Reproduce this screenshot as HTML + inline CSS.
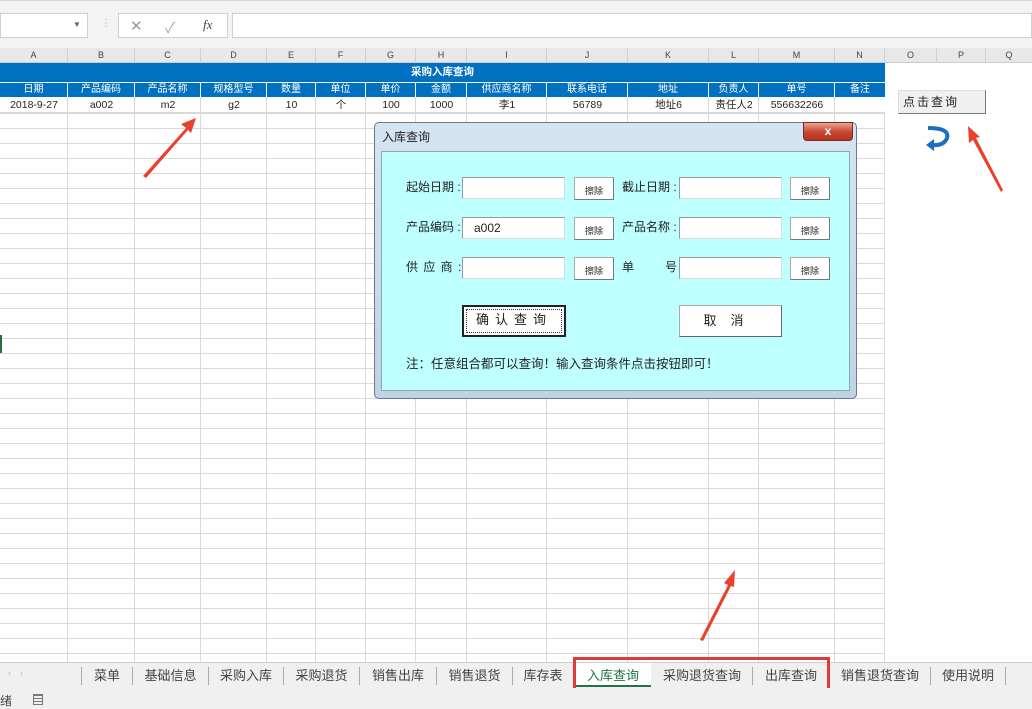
<!DOCTYPE html>
<html><head><meta charset="utf-8"><style>
*{margin:0;padding:0;box-sizing:border-box}
body{width:1032px;height:709px;overflow:hidden;background:#fff;font-family:"Liberation Sans","Noto Sans CJK SC",sans-serif;position:relative;font-size:11px;color:#222}
.a{position:absolute;white-space:nowrap}
.hc{position:absolute;top:48px;height:15px;font-size:9px;color:#444;text-align:center;line-height:15px;border-right:1px solid #d0d0d0}
.th{position:absolute;top:83px;height:14px;color:#fff;font-size:10px;text-align:center;line-height:14px;border-right:1px solid #fff;white-space:nowrap}
.td{position:absolute;top:97px;height:16px;font-size:10.5px;text-align:center;line-height:16px;white-space:nowrap}
.inp{position:absolute;background:#fff;border:1px solid #999;border-right-color:#ddd;border-bottom-color:#ddd;height:22px;width:103px}
.btn{position:absolute;background:#fff;border:1px solid #aaa;border-right-color:#777;border-bottom-color:#777;height:23px;width:40px;font-size:9px;text-align:center;line-height:26px}
.lb{position:absolute;font-size:12px;white-space:nowrap}
.tab{position:absolute;top:663px;height:25px;line-height:25px;font-size:13px;color:#444;text-align:center;white-space:nowrap}
.sep{position:absolute;top:667px;width:1px;height:18px;background:#aaa}
</style></head><body>
<div class="a" style="left:0;top:0;width:1032px;height:48px;background:#f3f3f3;border-top:1px solid #d6d6d6"></div>
<div class="a" style="left:0;top:13px;width:88px;height:25px;background:#fff;border:1px solid #d0d0d0"></div>
<div class="a" style="left:73px;top:20px;font-size:8px;color:#666">▼</div>
<div class="a" style="left:101px;top:18px;color:#aaa;font-size:10px">⋮</div>
<div class="a" style="left:118px;top:13px;width:110px;height:25px;background:#fff;border:1px solid #d0d0d0"></div>
<div class="a" style="left:130px;top:17px;color:#999;font-size:15px">✕</div>
<div class="a" style="left:165px;top:17px;color:#aaa;font-size:15px">✓</div>
<div class="a" style="left:203px;top:17px;color:#444;font-size:13px;font-style:italic;font-family:'Liberation Serif',serif">fx</div>
<div class="a" style="left:232px;top:13px;width:800px;height:25px;background:#fff;border:1px solid #d0d0d0"></div>
<div class="a" style="left:0;top:48px;width:1032px;height:15px;background:#e8e8e8;border-bottom:1px solid #ccc"></div>
<div class="hc" style="left:0;width:68px">A</div><div class="hc" style="left:68px;width:67px">B</div><div class="hc" style="left:135px;width:66px">C</div><div class="hc" style="left:201px;width:66px">D</div><div class="hc" style="left:267px;width:49px">E</div><div class="hc" style="left:316px;width:50px">F</div><div class="hc" style="left:366px;width:50px">G</div><div class="hc" style="left:416px;width:51px">H</div><div class="hc" style="left:467px;width:80px">I</div><div class="hc" style="left:547px;width:81px">J</div><div class="hc" style="left:628px;width:81px">K</div><div class="hc" style="left:709px;width:50px">L</div><div class="hc" style="left:759px;width:76px">M</div><div class="hc" style="left:835px;width:50px">N</div><div class="hc" style="left:885px;width:52px">O</div><div class="hc" style="left:937px;width:49px">P</div><div class="hc" style="left:986px;width:46px;border:0">Q</div>
<div class="a" style="left:0;top:113px;width:885px;height:550px;background-image:linear-gradient(#d9d9d9 1px,transparent 1px),linear-gradient(90deg,transparent 67px,#d9d9d9 67px,#d9d9d9 68px,transparent 68px,transparent 134px,#d9d9d9 134px,#d9d9d9 135px,transparent 135px,transparent 200px,#d9d9d9 200px,#d9d9d9 201px,transparent 201px,transparent 266px,#d9d9d9 266px,#d9d9d9 267px,transparent 267px,transparent 315px,#d9d9d9 315px,#d9d9d9 316px,transparent 316px,transparent 365px,#d9d9d9 365px,#d9d9d9 366px,transparent 366px,transparent 415px,#d9d9d9 415px,#d9d9d9 416px,transparent 416px,transparent 466px,#d9d9d9 466px,#d9d9d9 467px,transparent 467px,transparent 546px,#d9d9d9 546px,#d9d9d9 547px,transparent 547px,transparent 627px,#d9d9d9 627px,#d9d9d9 628px,transparent 628px,transparent 708px,#d9d9d9 708px,#d9d9d9 709px,transparent 709px,transparent 758px,#d9d9d9 758px,#d9d9d9 759px,transparent 759px,transparent 834px,#d9d9d9 834px,#d9d9d9 835px,transparent 835px,transparent 884px,#d9d9d9 884px,#d9d9d9 885px);background-size:885px 15px,885px 550px;background-repeat:repeat,no-repeat"></div>
<div class="a" style="left:0;top:63px;width:885px;height:34px;background:#0070c0"></div>
<div class="a" style="left:0;top:64px;width:885px;text-align:center;color:#fff;font-size:10.5px;font-weight:bold;line-height:17px">采购入库查询</div>
<div class="a" style="left:0;top:82px;width:885px;height:1px;background:#fff"></div>
<div class="th" style="left:0;width:68px">日期</div><div class="th" style="left:68px;width:67px">产品编码</div><div class="th" style="left:135px;width:66px">产品名称</div><div class="th" style="left:201px;width:66px">规格型号</div><div class="th" style="left:267px;width:49px">数量</div><div class="th" style="left:316px;width:50px">单位</div><div class="th" style="left:366px;width:50px">单价</div><div class="th" style="left:416px;width:51px">金额</div><div class="th" style="left:467px;width:80px">供应商名称</div><div class="th" style="left:547px;width:81px">联系电话</div><div class="th" style="left:628px;width:81px">地址</div><div class="th" style="left:709px;width:50px">负责人</div><div class="th" style="left:759px;width:76px">单号</div><div class="th" style="left:835px;width:50px;border:0">备注</div>
<div class="a" style="left:0;top:97px;width:885px;height:16px;border-bottom:1px solid #d9d9d9;background:linear-gradient(90deg,transparent 67px,#d9d9d9 67px,#d9d9d9 68px,transparent 68px,transparent 134px,#d9d9d9 134px,#d9d9d9 135px,transparent 135px,transparent 200px,#d9d9d9 200px,#d9d9d9 201px,transparent 201px,transparent 266px,#d9d9d9 266px,#d9d9d9 267px,transparent 267px,transparent 315px,#d9d9d9 315px,#d9d9d9 316px,transparent 316px,transparent 365px,#d9d9d9 365px,#d9d9d9 366px,transparent 366px,transparent 415px,#d9d9d9 415px,#d9d9d9 416px,transparent 416px,transparent 466px,#d9d9d9 466px,#d9d9d9 467px,transparent 467px,transparent 546px,#d9d9d9 546px,#d9d9d9 547px,transparent 547px,transparent 627px,#d9d9d9 627px,#d9d9d9 628px,transparent 628px,transparent 708px,#d9d9d9 708px,#d9d9d9 709px,transparent 709px,transparent 758px,#d9d9d9 758px,#d9d9d9 759px,transparent 759px,transparent 834px,#d9d9d9 834px,#d9d9d9 835px,transparent 835px)"></div>
<div class="td" style="left:0;width:68px">2018-9-27</div><div class="td" style="left:68px;width:67px">a002</div><div class="td" style="left:135px;width:66px">m2</div><div class="td" style="left:201px;width:66px">g2</div><div class="td" style="left:267px;width:49px">10</div><div class="td" style="left:316px;width:50px">个</div><div class="td" style="left:366px;width:50px">100</div><div class="td" style="left:416px;width:51px">1000</div><div class="td" style="left:467px;width:80px">李1</div><div class="td" style="left:547px;width:81px">56789</div><div class="td" style="left:628px;width:81px">地址6</div><div class="td" style="left:709px;width:50px">责任人2</div><div class="td" style="left:759px;width:76px">556632266</div>
<div class="a" style="left:0;top:335px;width:2px;height:18px;background:#217346"></div>
<div class="a" style="left:898px;top:90px;width:88px;height:24px;background:#f0f0f0;border:1px solid #ddd;border-right:1px solid #777;border-bottom:1px solid #777;font-size:12px;line-height:22px;padding-left:4px;letter-spacing:2px">点击查询</div>
<svg class="a" style="left:0;top:0" width="1032" height="709">
<path d="M928 128 Q950 128 947 138 Q944 146 932 145" stroke="#1a6fc0" stroke-width="4" fill="none"/>
<path d="M926 145 L934 139 L934 151 Z" fill="#1a6fc0"/>
<g fill="#e8412c">
<path d="M143 176 L186 128 L181 124 L196 118 L191 133 L188 130 L146 178Z"/>
<path d="M1001 192 L973 140 L969 143 L968 126 L980 137 L976 138 L1003 190Z"/>
<path d="M700 640 L728 585 L724 583 L735 570 L734 587 L731 586 L703 641Z"/>
<path d="M402 205 L446 204 L446 199 L460 208 L445 214 L446 209Z"/>
</g>
</svg>
<div class="a" style="left:374px;top:122px;width:483px;height:277px;border:1px solid #6a7a8a;border-radius:5px;background:linear-gradient(#d5e4f2,#bfd3e8)"></div>
<div class="a" style="left:382px;top:128px;font-size:12px">入库查询</div>
<div class="a" style="left:803px;top:122px;width:50px;height:19px;border-radius:0 0 4px 4px;background:linear-gradient(#e9a594,#c5442d 55%,#b33520);border:1px solid #7a2a1e;color:#fff;font-size:12px;font-weight:bold;text-align:center;line-height:17px">x</div>
<div class="a" style="left:381px;top:151px;width:469px;height:240px;background:#beffff;border:1px solid #8aa"></div>
<div class="lb" style="left:406px;top:178px">起始日期 :</div>
<div class="lb" style="left:406px;top:218px">产品编码 :</div>
<div class="lb" style="left:406px;top:258px;letter-spacing:1px">供 应 商 :</div>
<div class="lb" style="left:622px;top:178px">截止日期 :</div>
<div class="lb" style="left:622px;top:218px">产品名称 :</div>
<div class="lb" style="left:622px;top:258px">单</div><div class="lb" style="left:665px;top:258px">号</div>
<div class="inp" style="left:462px;top:177px"></div>
<div class="inp" style="left:462px;top:217px;font-size:12px;padding-left:11px;line-height:20px">a002</div>
<div class="inp" style="left:462px;top:257px"></div>
<div class="inp" style="left:679px;top:177px"></div>
<div class="inp" style="left:679px;top:217px"></div>
<div class="inp" style="left:679px;top:257px"></div>
<div class="btn" style="left:574px;top:177px">擦除</div><div class="btn" style="left:574px;top:217px">擦除</div><div class="btn" style="left:574px;top:257px">擦除</div>
<div class="btn" style="left:790px;top:177px">擦除</div><div class="btn" style="left:790px;top:217px">擦除</div><div class="btn" style="left:790px;top:257px">擦除</div>
<div class="a" style="left:462px;top:305px;width:104px;height:32px;background:#fff;border:2px solid #222;font-size:13px;text-align:center;line-height:26px;letter-spacing:6px"><div style="position:absolute;left:2px;top:2px;right:2px;bottom:2px;border:1px dotted #333"></div>确认查询</div>
<div class="a" style="left:679px;top:305px;width:103px;height:32px;background:#fff;border:1px solid #aaa;border-right-color:#666;border-bottom-color:#666;font-size:13px;text-align:center;line-height:30px;letter-spacing:14px">取消</div>
<div class="a" style="left:406px;top:353px;font-size:12.5px">注：任意组合都可以查询！输入查询条件点击按钮即可！</div>
<div class="a" style="left:0;top:662px;width:1032px;height:26px;background:#f0f0f0;border-top:1px solid #ccc"></div>
<div class="a" style="left:8px;top:668px;color:#bbb;font-size:10px">‹ &nbsp; ›</div>
<div class="sep" style="left:81px"></div><div class="tab" style="left:82px;width:50px">菜单</div>
<div class="sep" style="left:132px"></div><div class="tab" style="left:133px;width:75px">基础信息</div>
<div class="sep" style="left:208px"></div><div class="tab" style="left:209px;width:74px">采购入库</div>
<div class="sep" style="left:283px"></div><div class="tab" style="left:284px;width:75px">采购退货</div>
<div class="sep" style="left:359px"></div><div class="tab" style="left:360px;width:76px">销售出库</div>
<div class="sep" style="left:436px"></div><div class="tab" style="left:437px;width:75px">销售退货</div>
<div class="sep" style="left:512px"></div><div class="tab" style="left:513px;width:60px">库存表</div>
<div class="tab" style="left:575px;width:76px;background:#fff;color:#217346;border-bottom:2px solid #217346;height:24px">入库查询</div>
<div class="tab" style="left:652px;width:100px">采购退货查询</div>
<div class="sep" style="left:752px"></div><div class="tab" style="left:753px;width:76px">出库查询</div>
<div class="sep" style="left:829px"></div><div class="tab" style="left:830px;width:100px">销售退货查询</div>
<div class="sep" style="left:930px"></div><div class="tab" style="left:931px;width:74px">使用说明</div>
<div class="sep" style="left:1005px"></div>
<div class="a" style="left:573px;top:657px;width:257px;height:36px;border:3px solid #e03a3a"></div>
<div class="a" style="left:0;top:688px;width:1032px;height:21px;background:#f0f0f0"></div>
<div class="a" style="left:0;top:692px;font-size:12px;color:#444">绪</div>
<div class="a" style="left:33px;top:694px;width:10px;height:11px;border:1px solid #777;background:repeating-linear-gradient(#777 0 1px,transparent 1px 3px)"></div>
</body></html>
